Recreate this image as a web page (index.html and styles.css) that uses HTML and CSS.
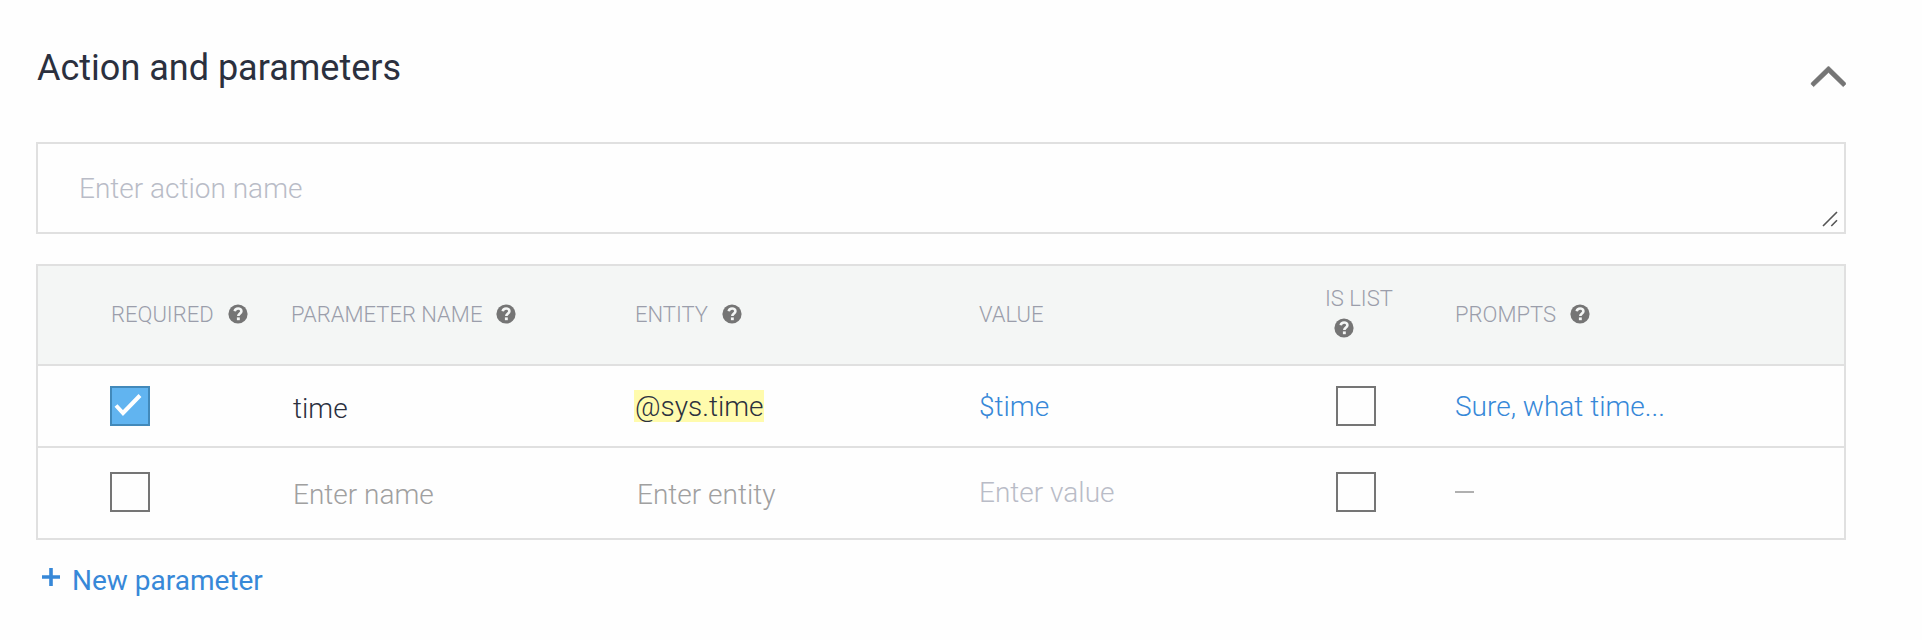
FILE: index.html
```html
<!DOCTYPE html>
<html lang="en">
<head>
<meta charset="utf-8">
<title>Action and parameters</title>
<link rel="stylesheet" href="styles.css">
</head>
<body>
<svg class="defs" width="0" height="0" aria-hidden="true">
  <symbol id="help" viewBox="0 0 20 20">
    <circle cx="10" cy="10" r="9.6" fill="#757575"/>
    <path d="M6.7 7.2C7.1 5.2 8.4 4.5 10.1 4.5C12.1 4.5 13.4 5.6 13.4 7.2C13.4 9.4 10.3 9.5 10.3 12.1" fill="none" stroke="#f4f6f5" stroke-width="2.6"/>
    <rect x="8.9" y="13.4" width="2.9" height="2.8" fill="#f4f6f5"/>
  </symbol>
</svg>
<main class="panel">
  <header class="panel-head">
    <h1 class="title">Action and parameters</h1>
    <svg class="chevron" width="36" height="22" viewBox="0 0 36 22"><path d="M1.1 18.2L3.6 20.7L18.5 6.6L33.2 20.7L35.8 18.2L35.8 17.1L19 0.6L18 0.6L1.1 17.1Z" fill="#757575" stroke="#757575" stroke-width=".5"/></svg>
  </header>
  <div class="action-field">
    <span class="action-hint">Enter action name</span>
    <svg class="resizer" width="18" height="18" viewBox="0 0 18 18"><path d="M2 16L16 2M10.3 16L16 10.3" fill="none" stroke="#555" stroke-width="1.6"/></svg>
  </div>
  <section class="table">
    <div class="row head">
      <div class="cell text">REQUIRED<svg class="help"><use href="#help"/></svg></div>
      <div class="cell text">PARAMETER NAME<svg class="help"><use href="#help"/></svg></div>
      <div class="cell text">ENTITY<svg class="help"><use href="#help"/></svg></div>
      <div class="cell text">VALUE</div>
      <div class="cell stacked">IS LIST<svg class="help"><use href="#help"/></svg></div>
      <div class="cell text">PROMPTS<svg class="help"><use href="#help"/></svg></div>
    </div>
    <div class="row">
      <div class="cell"><span class="box checked"><svg width="36" height="36" viewBox="0 0 36 36"><path d="M4 17.5L11 25L28 7.5" fill="none" stroke="#fff" stroke-width="4"/></svg></span></div>
      <div class="cell lowered inset">time</div>
      <div class="cell"><mark class="entity">@sys.time</mark></div>
      <div class="cell text link">$time</div>
      <div class="cell list"><span class="box"></span></div>
      <div class="cell text link">Sure, what time...</div>
    </div>
    <div class="row last">
      <div class="cell"><span class="box"></span></div>
      <div class="cell lowered inset gray">Enter name</div>
      <div class="cell lowered inset gray">Enter entity</div>
      <div class="cell text hint">Enter value</div>
      <div class="cell list"><span class="box"></span></div>
      <div class="cell text"><span class="dash"></span></div>
    </div>
  </section>
  <div class="add">
    <svg class="plus" width="18" height="18" viewBox="0 0 18 18"><path d="M9 0V18M0 9H18" stroke="#3788d8" stroke-width="3.6"/></svg>
    <span>New parameter</span>
  </div>
</main>
</body>
</html>
```
FILE: styles.css
```css
* { box-sizing: border-box; }
body {
  margin: 0;
  background: #fefefe;
  color: #2b303e;
  font-family: Roboto, "Liberation Sans", sans-serif;
  font-size: 28px;
  font-weight: 300;
}
.defs { display: block; }
.panel { width: 1846px; padding: 44px 0 0 36px; }
.panel-head {
  display: flex;
  justify-content: space-between;
  height: 98px;
}
.title { margin: 0; padding-left: 1px; font-size: 36px; font-weight: 400; line-height: 48px; }
.chevron { margin-top: 22px; }
.action-field {
  display: flex;
  align-items: center;
  justify-content: space-between;
  height: 92px;
  margin-bottom: 30px;
  padding: 0 5px 0 41px;
  border: 2px solid #e0e0e0;
}
.action-hint { color: #b9bcc7; }
.resizer { align-self: flex-end; margin-bottom: 4px; }
.table { border: 2px solid #e0e0e0; }
.row {
  display: grid;
  grid-template-columns: 180px 344px 344px 348px 128px 1fr;
  align-items: center;
  height: 82px;
  padding-left: 72px;
  border-bottom: 2px solid #e0e0e0;
}
.row.head {
  height: 100px;
  background: #f4f6f5;
  color: #9b9eab;
  font-size: 22px;
}
.row.last { height: 90px; padding-bottom: 2px; border-bottom: 0; }
.cell { display: flex; align-items: center; white-space: nowrap; line-height: 32px; }
.text { padding-left: 1px; padding-top: 2px; }
.head .text { padding-top: 0; }
.help { width: 20px; height: 20px; margin-left: 14px; }
.head .text .help { margin-top: -2px; }
.stacked {
  flex-direction: column;
  align-items: flex-start;
  margin-left: -1px;
  padding-bottom: 4px;
  line-height: 30px;
}
.stacked .help { margin-left: 9px; margin-top: 4px; margin-bottom: 5px; }
.list { padding-left: 10px; }
.lowered { padding-top: 6px; }
.inset { padding-left: 3px; }
.gray { color: #a0a0a0; }
.hint { color: #b9bcc7; }
.link { color: #3788d8; }
.entity { background: linear-gradient(#fffbad, #fffbad) 0 0 / 100% 32px no-repeat; color: inherit; padding: 1px 0 0 1px; margin-bottom: -1px; line-height: 32px; }
.box { width: 40px; height: 40px; border: 2px solid #757575; }
.box.checked { background: #61b4f0; border-color: #4289ba; }
.box svg { display: block; }
.dash { width: 19px; height: 2px; margin-top: -2px; background: #b0b0b0; }
.add {
  display: flex;
  align-items: center;
  gap: 12px;
  height: 40px;
  margin-top: 20px;
  padding-left: 6px;
  color: #3788d8;
  font-weight: 400;
}
.plus { margin-top: -6px; }
```
